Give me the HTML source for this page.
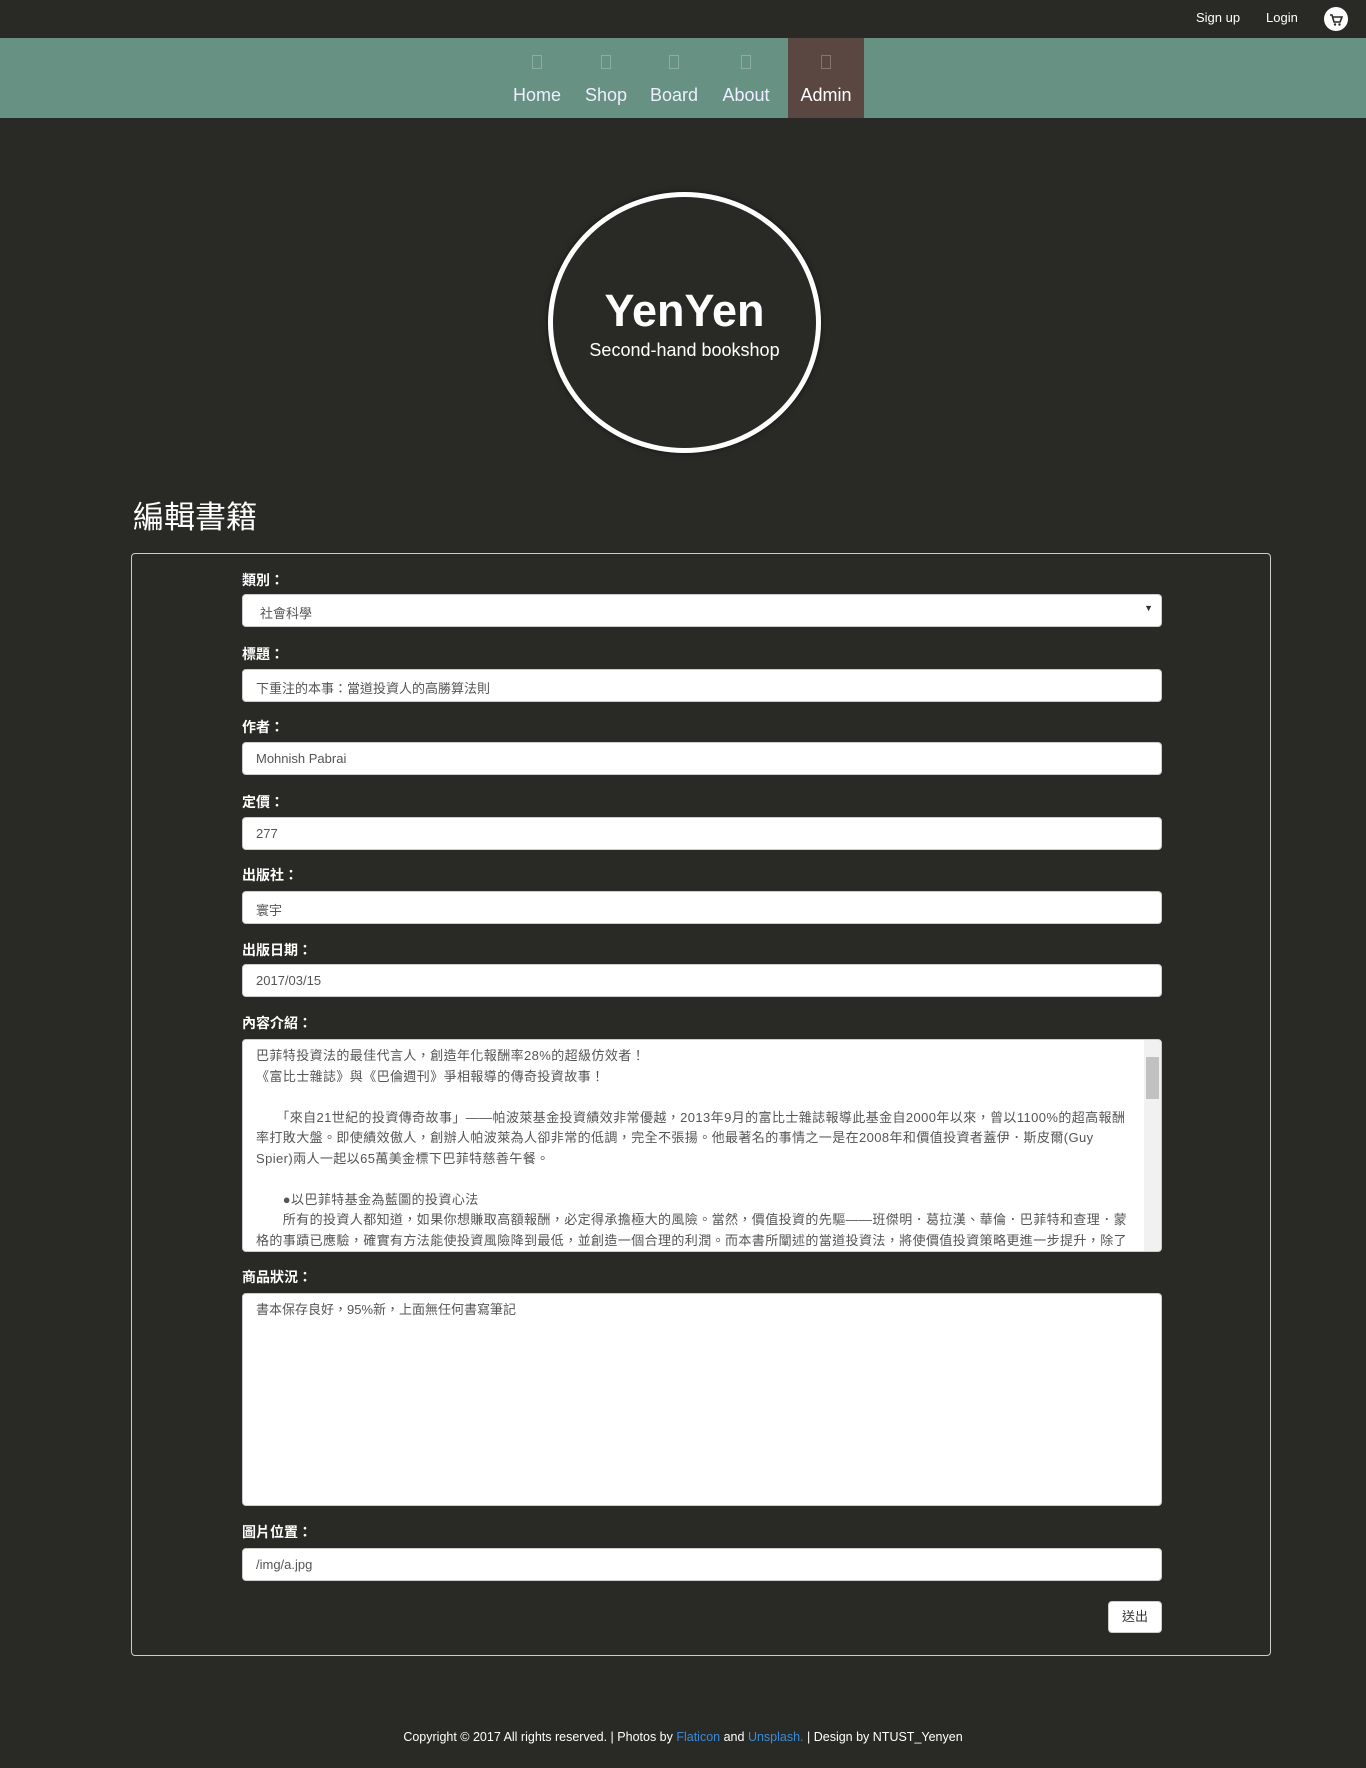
<!DOCTYPE html>
<html><head><meta charset="utf-8"><style>
*{box-sizing:border-box;margin:0;padding:0}
body{width:1366px;height:1768px;background:#292a26;font-family:"Liberation Sans","Noto Sans CJK TC",sans-serif;color:#fff;position:relative;overflow:hidden}
.top{position:absolute;left:0;top:0;width:1366px;height:38px;background:#292a26}
.top span{position:absolute;top:10px;font-size:13px}
.cart{position:absolute;left:1324px;top:7px;width:24px;height:24px;border-radius:50%;background:#fff}
.nav{position:absolute;left:0;top:38px;width:1366px;height:80px;background:#679183}
.ni{position:absolute;top:0;height:80px;text-align:center;font-size:18px;color:#eef}
.ni .ic{display:block;margin:17px auto 0;width:10px;height:14px;border:1px solid rgba(255,255,255,.25)}
.ni .t{display:block;margin-top:16px}
.circle{position:absolute;left:548px;top:192px;width:273px;height:261px;border:5px solid #fff;border-radius:50%;text-align:center;box-shadow:0 0 6px rgba(0,0,0,.5)}
.circle h1{font-size:45px;font-weight:bold;margin-top:91px;line-height:46px}
.circle p{font-size:18px;margin-top:6px}
h2{position:absolute;left:133px;top:492px;font-size:31px;font-weight:normal}
.box{position:absolute;left:131px;top:553px;width:1140px;height:1103px;border:1px solid #ccc;border-radius:4px}
.lab{position:absolute;left:242px;font-size:14px;font-weight:bold}
.inp{position:absolute;left:242px;width:920px;height:33px;background:#fff;border:1px solid #ccc;border-radius:4px;color:#555;font-size:13px;padding:8px 13px}
.ta{line-height:20.5px;padding:6px 13px;height:213px;overflow:hidden}
.sb{position:absolute;right:0;top:0;width:17px;height:100%;background:#f1f1f1}
.btn{position:absolute;left:1108px;top:1601px;width:54px;height:32px;background:#fff;border:1px solid #ccc;border-radius:4px;color:#333;font-size:13px;text-align:center;line-height:30px}
.foot{position:absolute;top:1730px;width:1366px;text-align:center;font-size:12.5px}
.foot a{color:#3a8ad6}
</style></head><body>
<div class="top"><span style="left:1196px">Sign up</span><span style="left:1266px">Login</span><div class="cart"><svg width="24" height="24" viewBox="0 0 24 24"><path d="M6 8h2l2 7h6l2-5H9" stroke="#292a26" stroke-width="1.6" fill="none"/><circle cx="11" cy="17.5" r="1.2" fill="#292a26"/><circle cx="15.5" cy="17.5" r="1.2" fill="#292a26"/></svg></div></div>
<div class="nav">
<div class="ni" style="left:508px;width:58px"><span class="ic"></span><span class="t">Home</span></div>
<div class="ni" style="left:580px;width:52px"><span class="ic"></span><span class="t">Shop</span></div>
<div class="ni" style="left:646px;width:56px"><span class="ic"></span><span class="t">Board</span></div>
<div class="ni" style="left:716px;width:60px"><span class="ic"></span><span class="t">About</span></div>
<div class="ni" style="left:788px;width:76px;background:#5a4742;color:#fff"><span class="ic"></span><span class="t">Admin</span></div>
</div>
<div class="circle"><h1>YenYen</h1><p>Second-hand bookshop</p></div>
<h2>編輯書籍</h2>
<div class="box"></div>
<div class="lab" style="top:570px">類別：</div>
<div class="inp" style="top:594px;padding-left:17px">社會科學<span style="position:absolute;right:8px;top:8px;font-size:9px;color:#333">▼</span></div>
<div class="lab" style="top:644px">標題：</div>
<div class="inp" style="top:669px">下重注的本事：當道投資人的高勝算法則</div>
<div class="lab" style="top:717px">作者：</div>
<div class="inp" style="top:742px">Mohnish Pabrai</div>
<div class="lab" style="top:792px">定價：</div>
<div class="inp" style="top:817px">277</div>
<div class="lab" style="top:865px">出版社：</div>
<div class="inp" style="top:891px">寰宇</div>
<div class="lab" style="top:940px">出版日期：</div>
<div class="inp" style="top:964px">2017/03/15</div>
<div class="lab" style="top:1013px">內容介紹：</div>
<div class="inp ta" style="top:1039px;padding-right:30px;letter-spacing:0.4px">巴菲特投資法的最佳代言人，創造年化報酬率28%的超級仿效者！<br>《富比士雜誌》與《巴倫週刊》爭相報導的傳奇投資故事！<br><br>　　「來自21世紀的投資傳奇故事」——帕波萊基金投資績效非常優越，2013年9月的富比士雜誌報導此基金自2000年以來，曾以1100%的超高報酬率打敗大盤。即使績效傲人，創辦人帕波萊為人卻非常的低調，完全不張揚。他最著名的事情之一是在2008年和價值投資者蓋伊．斯皮爾(Guy Spier)兩人一起以65萬美金標下巴菲特慈善午餐。<br><br>　　●以巴菲特基金為藍圖的投資心法<br>　　所有的投資人都知道，如果你想賺取高額報酬，必定得承擔極大的風險。當然，價值投資的先驅——班傑明．葛拉漢、華倫．巴菲特和查理．蒙格的事蹟已應驗，確實有方法能使投資風險降到最低，並創造一個合理的利潤。而本書所闡述的當道投資法，將使價值投資策略更進一步提升，除了低風險之外，更能賺取高額報酬。<div class="sb"><div style="position:absolute;left:2px;top:17px;width:13px;height:42px;background:#c1c1c1"></div></div></div>
<div class="lab" style="top:1267px">商品狀況：</div>
<div class="inp ta" style="top:1293px">書本保存良好，95%新，上面無任何書寫筆記</div>
<div class="lab" style="top:1522px">圖片位置：</div>
<div class="inp" style="top:1548px">/img/a.jpg</div>
<div class="btn">送出</div>
<div class="foot">Copyright © 2017 All rights reserved. | Photos by <a>Flaticon</a> and <a>Unsplash.</a> | Design by NTUST_Yenyen</div>
</body></html>
